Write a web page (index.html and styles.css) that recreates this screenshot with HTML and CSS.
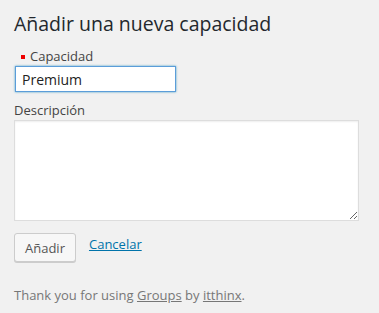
FILE: index.html
```html
<!DOCTYPE html>
<html lang="es">
<head>
    <meta charset="UTF-8">
    <meta name="viewport" content="width=device-width, initial-scale=1.0">
    <link rel="stylesheet" href="styles.css">
</head>
<body>
	<div class="wrap">
		<h2 class="title">Añadir una nueva capacidad</h2>

		<form class="cap-form">
			<div class="field">
				<label class="field-label required" for="cap-name">Capacidad</label>
				<input type="text" id="cap-name" class="cap-name" value="Premium">
			</div>
			<div class="field">
				<label class="field-label" for="cap-desc">Descripción</label>
				<textarea id="cap-desc" class="cap-desc"></textarea>
			</div>
			<div class="actions">
				<button type="button" class="button">Añadir</button>
				<a href="#" class="cancel">Cancelar</a>
			</div>
		</form>

		<p class="footer">Thank you for using <a href="#">Groups</a> by <a href="#">itthinx</a>.</p>
	</div>
</body>
</html>
```

FILE: styles.css
```css
html, body {margin: 0; padding: 0; background: #f1f1f1; }
body {font-family: "Open Sans", "Liberation Sans", sans-serif; font-size: 13px; color: #444; }

.wrap {padding: 0 14px; }
.title {margin: 0; padding: 9px 0 0; font-size: 19.5px; font-weight: 400; line-height: 29px; color: #23282d; }

/* formulario */
.cap-form .field {display: flex; flex-direction: column; align-items: flex-start; }
.field-label {line-height: 20px; margin-top: 8px; }
.field-label.required {padding-left: 16px; position: relative; }
.field-label.required::before {content: ""; position: absolute; left: 7px; top: 9px; width: 4px; height: 4px; background: #e00; }

.cap-name {
	width: 161px;
	height: 26px;
	margin: 0 0 0 1px;
	padding: 0 6px;
	box-sizing: border-box;
	font: 14px "Open Sans", "Liberation Sans", sans-serif;
	color: #222;
	background: #fff;
	border: 1px solid #5b9dd9;
	box-shadow: 0 0 2px rgba(30,140,190,0.8);
	outline: 0;
}
.cap-desc {
	width: 345px;
	height: 101px;
	margin: 0;
	box-sizing: border-box;
	background: #fff;
	border: 1px solid #ddd;
	box-shadow: inset 0 1px 2px rgba(0,0,0,0.07);
	resize: both;
}

.actions {display: flex; align-items: flex-start; margin-top: 12px; }
.button {
	height: 29px;
	padding: 0 10px;
	font: 13px "Open Sans", "Liberation Sans", sans-serif;
	color: #555;
	background: #f7f7f7;
	border: 1px solid #ccc;
	border-radius: 3px;
	box-shadow: 0 1px 0 #ccc;
}
.cancel {margin: 2px 0 0 13px; color: #0073aa; text-decoration: underline; line-height: 18px; }

.footer {margin: 23px 0 0; color: #777; line-height: 20px; }
.footer a {color: #777; text-decoration: underline; }
```
